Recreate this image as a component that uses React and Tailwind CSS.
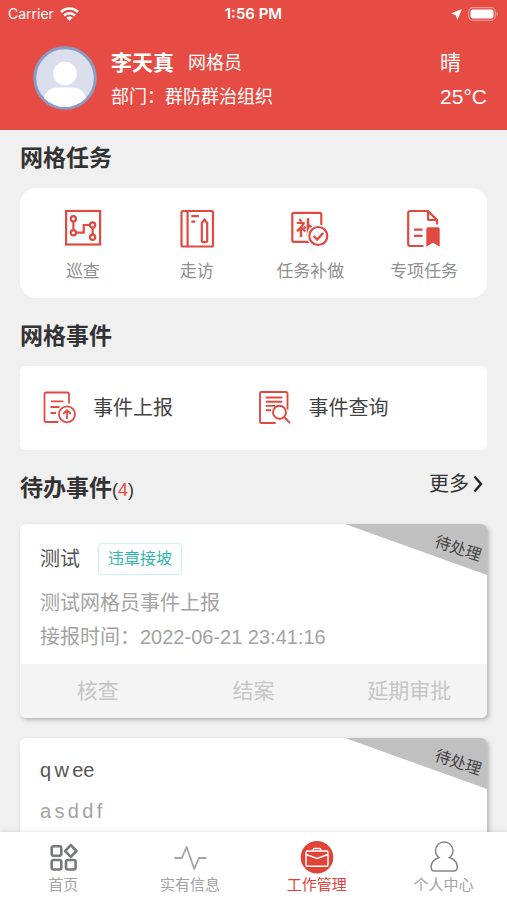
const tasks = [
  { label: '巡查', Icon: PatrolIcon },
  { label: '走访', Icon: VisitIcon },
  { label: '任务补做', Icon: RedoIcon },
  { label: '专项任务', Icon: SpecialIcon },
]

const eventLinks = [
  { label: '事件上报', Icon: ReportIcon },
  { label: '事件查询', Icon: SearchIcon },
]

const todos = [
  {
    id: 1,
    title: '测试',
    tag: '违章接坡',
    desc: '测试网格员事件上报',
    time: '2022-06-21 23:41:16',
    status: '待处理',
    actions: ['核查', '结案', '延期审批'],
  },
  {
    id: 2,
    title: 'q\u2006w\u2006ee',
    desc: 'a\u2006s\u2006d\u2006d\u2006f',
    status: '待处理',
  },
]

const tabs = [
  { label: '首页', Icon: HomeIcon },
  { label: '实有信息', Icon: PulseIcon },
  { label: '工作管理', Icon: WorkIcon, active: true },
  { label: '个人中心', Icon: PersonIcon },
]

function PatrolIcon() {
  return (
    <svg className="w-10 h-10" viewBox="0 0 40 40" fill="none" stroke="#e04a40" strokeWidth="2.2">
      <rect x="3.1" y="2" width="34" height="33.5" />
      <path d="M10.4 12.5v8.5M13 23.7h7.7V16H27M29.6 18.8v6.7" />
      <circle cx="10.4" cy="9.7" r="2.6" />
      <circle cx="10.4" cy="23.7" r="2.6" />
      <circle cx="29.6" cy="16" r="2.6" />
      <circle cx="29.6" cy="28.3" r="2.6" />
    </svg>
  )
}

function VisitIcon() {
  return (
    <svg className="w-10 h-10" viewBox="0 0 40 40" fill="none" stroke="#e04a40" strokeWidth="2.2">
      <rect x="4.5" y="2" width="31.5" height="35.5" rx="1.5" />
      <path d="M10.6 2v35.5M14.3 7.2h7.5M14.3 12.7h4" />
      <path d="M24.8 14.2l2.7-3.7 2.7 3.7v17.5a1.5 1.5 0 0 1-1.5 1.5h-2.4a1.5 1.5 0 0 1-1.5-1.5z" />
    </svg>
  )
}

function RedoIcon() {
  return (
    <svg className="w-10 h-10" viewBox="0 0 40 40" fill="none" stroke="#e04a40" strokeWidth="2.2">
      <rect x="2.3" y="3.8" width="29" height="29" rx="1.5" />
      <text x="6" y="26" fontSize="19" fontWeight="700" fill="#e04a40" stroke="none">补</text>
      <circle cx="28.3" cy="27" r="9.5" fill="#fff" stroke="#fff" strokeWidth="4" />
      <circle cx="28.3" cy="27" r="9" strokeWidth="2.2" />
      <path d="M23.6 27l3.6 3.6 6-6.6" strokeWidth="2.4" />
    </svg>
  )
}

function SpecialIcon() {
  return (
    <svg className="w-10 h-10" viewBox="0 0 40 40" fill="none" stroke="#e04a40" strokeWidth="2.2">
      <path d="M19.5 37H6.2a2 2 0 0 1-2-2V4a2 2 0 0 1 2-2H24l9 9v4.5" />
      <path d="M24 2v7.5a1.5 1.5 0 0 0 1.5 1.5H33M10 20.7h8.5M10 26.8h8.5" />
      <path d="M24 18.3h10a1.7 1.7 0 0 1 1.7 1.7v17.7L29 33.7l-6.7 4V20a1.7 1.7 0 0 1 1.7-1.7z" fill="#e04a40" stroke="none" />
    </svg>
  )
}

function ReportIcon() {
  return (
    <svg className="w-[34px] h-[34px]" viewBox="0 0 34 34" fill="none" stroke="#e04a40" strokeWidth="1.8">
      <path d="M27 12.5V3a1.5 1.5 0 0 0-1.5-1.5H4A1.5 1.5 0 0 0 2.5 3v26.5A1.5 1.5 0 0 0 4 31h12.5" />
      <path d="M9 10.3h12.5M8.5 16h9M8.5 22H14" />
      <circle cx="25" cy="23.3" r="8" />
      <path d="M25 28v-8.5M21.2 23l3.8-3.8 3.8 3.8" />
    </svg>
  )
}

function SearchIcon() {
  return (
    <svg className="w-[34px] h-[34px]" viewBox="0 0 34 34" fill="none" stroke="#e04a40" strokeWidth="1.9">
      <path d="M29.5 18.5V2.5A1.5 1.5 0 0 0 28 1H3.5A1.5 1.5 0 0 0 2 2.500v28.1A1.5 1.5 0 0 0 3.5 32h14.2" />
      <path d="M7.7 6.5h16.6M7.7 10.7h16.6M7.7 14.9H17M7.7 19.3H13" />
      <circle cx="21.5" cy="21.3" r="6.5" />
      <path d="M26.2 26l5.8 6.2" />
    </svg>
  )
}

function HomeIcon() {
  return (
    <svg className="w-[34px] h-[34px]" viewBox="0 0 34 34" fill="none" stroke="#77797c" strokeWidth="2.6" strokeLinejoin="round">
      <rect x="5.7" y="6.3" width="9.6" height="9.5" rx="2" />
      <rect x="5.7" y="20" width="9.6" height="9.5" rx="2" />
      <rect x="20" y="20" width="9.6" height="9.5" rx="2" />
      <path d="M24.8 5.2l5.7 5.8-5.7 5.8L19.100 11z" />
    </svg>
  )
}

function PulseIcon() {
  return (
    <svg className="w-[34px] h-[34px]" viewBox="0 0 34 34" fill="none" stroke="#a3a3a3" strokeWidth="1.8" strokeLinejoin="round" strokeLinecap="round">
      <path d="M2 18h6.9l4.7-11 7.7 22L26 18h6.5" />
    </svg>
  )
}

function WorkIcon() {
  return (
    <svg className="w-[34px] h-[34px]" viewBox="0 0 34 34" fill="none" stroke="#fff" strokeWidth="1.5">
      <circle cx="17" cy="17.3" r="16.3" fill="#e04338" stroke="none" />
      <rect x="6" y="11" width="22" height="15.2" rx="1.5" />
      <path d="M13.2 11V9.8a1.3 1.3 0 0 1 1.300-1.300h5a1.3 1.3 0 0 1 1.300 1.300V11M6 14.500l11 4 11-4" />
    </svg>
  )
}

function PersonIcon() {
  return (
    <svg className="w-[34px] h-[34px]" viewBox="0 0 34 34" fill="none" stroke="#858585" strokeWidth="1.5">
      <path d="M12 17.5C9.6 15.8 8.5 13.5 8.5 10.700a8.7 8.7 0 0 1 17.4 0c0 2.8-1.1 5.1-3.5 6.8 4.8 1.6 7.9 5.2 7.900 9.800 0 2.600-1.200 3.700-3.800 3.700H7.900c-2.600 0-3.800-1.100-3.800-3.700 0-4.600 3.100-8.200 7.900-9.800z" />
    </svg>
  )
}

function StatusBar() {
  return (
    <div className="grid grid-cols-3 items-center h-7 px-2 font-['Inter',sans-serif] text-sm text-white">
      <div className="flex items-center gap-[6px]">
        <span>Carrier</span>
        <svg className="w-[19px] h-[14px]" viewBox="0 0 19 14" fill="none" stroke="#fff" strokeWidth="2.6">
          <path d="M1 5a12 12 0 0 1 17 0M4 8.5a7.800 7.800 0 0 1 11 0" />
          <path d="M9.500 14L6.300 10.800a4.500 4.500 0 0 1 6.400 0z" fill="#fff" stroke="none" />
        </svg>
      </div>
      <span className="text-center text-[15px] leading-5 font-semibold">1:56 PM</span>
      <div className="flex items-center justify-end gap-[6px]">
        <svg className="w-[11px] h-[11px]" viewBox="0 0 11 11" fill="#fff">
          <path d="M11 0L6.400 11 4.800 6.200 0 4.600z" />
        </svg>
        <svg className="w-[31px] h-[14px]" viewBox="0 0 31 14">
          <rect x=".7" y=".7" width="26.6" height="12.6" rx="4" fill="none" stroke="#fff" strokeOpacity=".4" strokeWidth="1.2" />
          <rect x="2.5" y="2.5" width="23" height="9" rx="2.3" fill="#fff" />
          <path d="M28.7 4.8a2.6 2.6 0 0 1 0 4.4z" fill="#fff" fillOpacity=".5" />
        </svg>
      </div>
    </div>
  )
}

function Avatar() {
  return (
    <svg className="w-16 h-16 shrink-0" viewBox="0 0 64 64">
      <defs>
        <clipPath id="avatar-clip">
          <circle cx="32" cy="32" r="29" />
        </clipPath>
      </defs>
      <circle cx="32" cy="32" r="30.3" fill="#dadeed" stroke="#8c9bc4" strokeWidth="3" />
      <g clipPath="url(#avatar-clip)" fill="#fff">
        <circle cx="32" cy="27.5" r="11.8" />
        <path d="M10 58c0-10 6-16.5 15-16.5h14c9 0 15 6.5 15 16.5v6H10z" />
      </g>
    </svg>
  )
}

function Header() {
  return (
    <header className="shrink-0 bg-[#e64c43] text-white">
      <StatusBar />
      <div className="flex items-start pt-[18px] pb-4 pl-[33px] pr-5">
        <Avatar />
        <div className="flex-1 ml-[14px]">
          <div className="flex items-center gap-[14px]">
            <span className="text-[21px] leading-[34px] font-bold">李天真</span>
            <span className="text-lg leading-[34px]">网格员</span>
          </div>
          <p className="text-lg leading-[34px]">部门：群防群治组织</p>
        </div>
        <div className="text-[21px] leading-[34px]">
          <p>晴</p>
          <p>25°C</p>
        </div>
      </div>
    </header>
  )
}

function TodoCard({ todo }) {
  return (
    <article className="relative rounded-md bg-white overflow-hidden shadow-[2px_2px_4px_rgba(0,0,0,0.25)]">
      <div className="absolute top-0 right-0 w-[142px] h-[51px] bg-[#c0c0c0] [clip-path:polygon(0_0,100%_0,100%_100%)]">
        <span className="absolute right-[5px] top-[13px] rotate-[18deg] text-base leading-6 text-[#444]">{todo.status}</span>
      </div>
      <div className="px-5 pt-[19px] pb-[10px]">
        <div className="flex items-center gap-[18px] mb-[11px]">
          <h3 className="text-xl leading-[26px] text-[#555]">{todo.title}</h3>
          {todo.tag && (
            <span className="px-[9px] border border-[#c9f3ee] rounded-sm text-base leading-[30px] text-[#2cb8ac]">{todo.tag}</span>
          )}
        </div>
        <p className="text-xl leading-[34px] text-[#a3a3a3]">{todo.desc}</p>
        {todo.time && <p className="text-xl leading-[34px] text-[#a3a3a3]">接报时间：{todo.time}</p>}
      </div>
      {todo.actions && (
        <div className="grid grid-cols-3 bg-[#f4f4f4] text-[21px] leading-[54px] text-[#c6c6c6]">
          {todo.actions.map(action => (
            <button key={action} type="button">{action}</button>
          ))}
        </div>
      )}
    </article>
  )
}

function TabBar() {
  return (
    <nav className="relative shrink-0 grid grid-cols-4 pt-2 pb-[5px] bg-white shadow-[0_-1px_4px_rgba(0,0,0,0.1)]">
      {tabs.map(({ label, Icon, active }) => (
        <a key={label} href="#" className="flex flex-col items-center gap-px">
          <Icon />
          <span className={`text-[15px] leading-5 ${active ? 'text-[#e04338]' : 'text-[#a3a3a3]'}`}>{label}</span>
        </a>
      ))}
    </nav>
  )
}

export default function App() {
  return (
    <div className="flex flex-col h-screen bg-[#f0f0f0] font-['Liberation_Sans','Noto_Sans_CJK_SC',sans-serif]">
      <Header />

      <main className="flex-1 min-h-0 overflow-y-auto [scrollbar-width:none] px-5 pb-5">
        <h2 className="mt-3 mb-[14px] text-[23px] leading-8 font-bold text-[#333]">网格任务</h2>
        <div className="grid grid-cols-4 px-[6px] pt-[21px] pb-[14px] rounded-2xl bg-white">
          {tasks.map(({ label, Icon }) => (
            <button key={label} type="button" className="flex flex-col items-center gap-[11px]">
              <Icon />
              <span className="text-[17px] leading-6 text-[#8f8f8f]">{label}</span>
            </button>
          ))}
        </div>

        <h2 className="mt-[22px] mb-[14px] text-[23px] leading-8 font-bold text-[#333]">网格事件</h2>
        <div className="grid grid-cols-2 pl-[22px] pr-[14px] py-[25px] rounded-md bg-white">
          {eventLinks.map(({ label, Icon }) => (
            <button key={label} type="button" className="flex items-center gap-[17px]">
              <Icon />
              <span className="text-xl leading-[34px] text-[#444]">{label}</span>
            </button>
          ))}
        </div>

        <div className="flex items-start justify-between mt-[22px] mb-5">
          <h2 className="text-[23px] leading-8 font-bold text-[#333]">
            待办事件
            <span className="text-lg font-normal">(<span className="text-[#e64c43]">{4}</span>)</span>
          </h2>
          <a href="#" className="flex items-center gap-1 pr-1 text-xl leading-6 text-[#333]">
            更多
            <svg className="w-[10px] h-[18px]" viewBox="0 0 10 18" fill="none" stroke="#222" strokeWidth="2.4">
              <path d="M1.5 1.5L8 9l-6.5 7.5" />
            </svg>
          </a>
        </div>
        <div className="space-y-5">
          {todos.map(todo => <TodoCard key={todo.id} todo={todo} />)}
        </div>
      </main>

      <TabBar />
    </div>
  )
}
